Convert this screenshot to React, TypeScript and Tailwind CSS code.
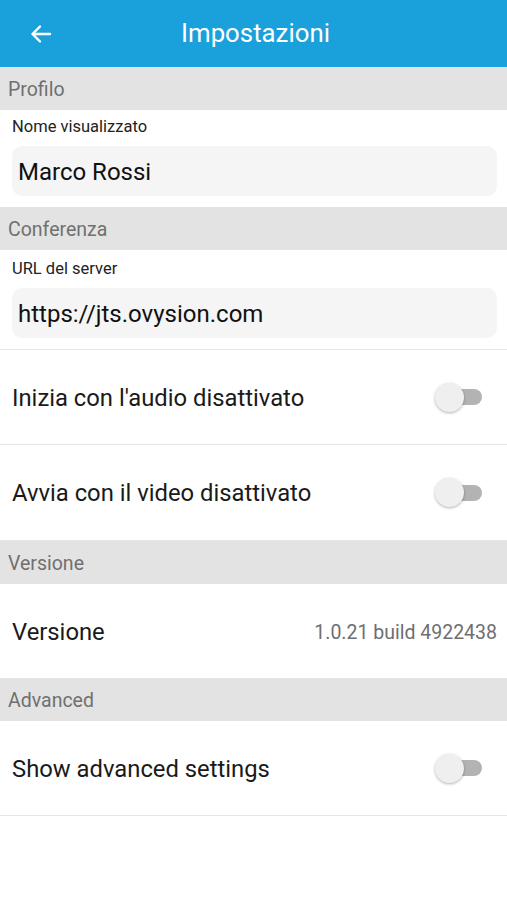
import React from "react";

const font = { fontFamily: "Roboto, 'Noto Sans', sans-serif" };

const SectionHeader: React.FC<{ title: string }> = ({ title }) => (
  <div className="h-[43px] bg-[#e3e3e3] flex items-center px-2 pt-[3px] text-[19.5px] text-[#707070]">
    {title}
  </div>
);

const Field: React.FC<{ label: string; value: string; top?: string }> = ({ label, value, top }) => (
  <div className={(top ?? "pt-[8px]") + " pb-[11px] pl-3 pr-[10px]"}>
    <div className="h-[19px] flex items-center text-[16.5px] text-[#222]">{label}</div>
    <div className="mt-[9px] h-[50px] rounded-[10px] bg-[#f5f5f5] flex items-center pl-[6px] pt-[2px] text-[24px] text-[#111]">
      {value}
    </div>
  </div>
);

const Toggle: React.FC = () => (
  <div className="relative w-[48px] h-[30px] flex items-center">
    <div className="absolute left-[10px] w-[37px] h-[16px] rounded-full bg-[#b3b3b3]" />
    <div className="absolute left-0 w-[29px] h-[29px] rounded-full bg-[#efefef] shadow-[0_1px_3px_rgba(0,0,0,0.3)]" />
  </div>
);

const ToggleRow: React.FC<{ label: string; tall?: boolean }> = ({ label, tall }) => (
  <div
    className={
      (tall ? "h-[96px]" : "h-[95px]") +
      " flex items-center justify-between pl-3 pr-[24px] border-b border-[#e6e6e6]"
    }
  >
    <span className="pt-[3px] text-[23.8px] text-[#1a1a1a]">{label}</span>
    <Toggle />
  </div>
);

export default function App() {
  return (
    <div className="w-[507px] h-[900px] bg-white" style={font}>
      {/* barra */}
      <div className="h-[67px] bg-[#1aa1db] flex items-center">
        <svg className="ml-[29px]" width="24" height="24" viewBox="0 0 24 24" fill="none" stroke="white" strokeWidth="2.4" strokeLinecap="round" strokeLinejoin="round">
          <path d="M21 12H3.5M11 4.5L3.5 12l7.5 7.5" />
        </svg>
        <span className="ml-[128px] text-[25.8px] text-white">Impostazioni</span>
      </div>

      <SectionHeader title="Profilo" />
      <Field label="Nome visualizzato" value="Marco Rossi" />

      <SectionHeader title="Conferenza" />
      <div className="border-b border-[#e6e6e6]">
        <Field label="URL del server" value="https://jts.ovysion.com" top="pt-[10px]" />
      </div>

      <ToggleRow label="Inizia con l'audio disattivato" />
      <ToggleRow label="Avvia con il video disattivato" tall />

      <SectionHeader title="Versione" />
      <div className="h-[94px] flex items-center justify-between pl-3 pr-[10px]">
        <span className="pt-[3px] text-[23.8px] text-[#1a1a1a]">Versione</span>
        <span className="pt-[3px] text-[19.5px] text-[#6f6f6f]">1.0.21 build 4922438</span>
      </div>

      <SectionHeader title="Advanced" />
      <ToggleRow label="Show advanced settings" />
    </div>
  );
}
